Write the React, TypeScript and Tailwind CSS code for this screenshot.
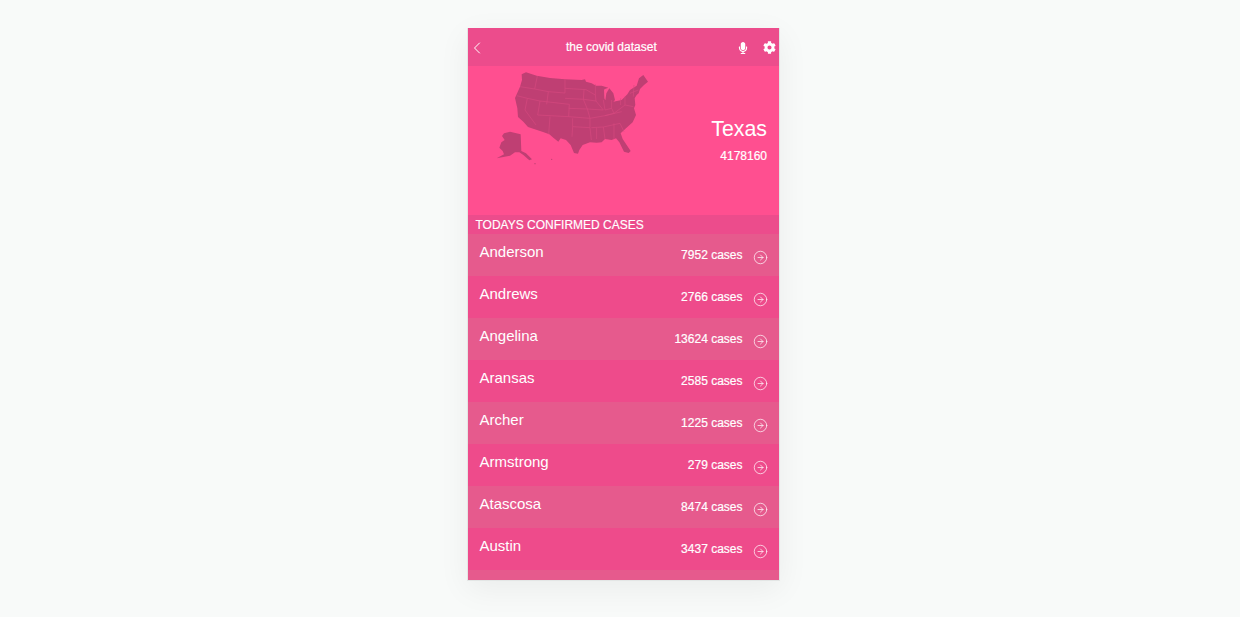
import { ChevronLeft, CircleArrowRight } from "lucide-react";
import { FaCog, FaMicrophone } from "react-icons/fa";

const counties = [
  { name: "Anderson", cases: 7952 },
  { name: "Andrews", cases: 2766 },
  { name: "Angelina", cases: 13624 },
  { name: "Aransas", cases: 2585 },
  { name: "Archer", cases: 1225 },
  { name: "Armstrong", cases: 279 },
  { name: "Atascosa", cases: 8474 },
  { name: "Austin", cases: 3437 },
];

// hand traced, coordinates are 3x screen pixels
function UsMap() {
  return (
    <svg viewBox="0 0 510 300" className="h-[100px] w-[170px] blur-[0.5px]" aria-hidden="true">
      <g fill="#bf3f73">
        <path d="M95 28 108 22 140 32 180 39 225 43 275 45 285 43 288 50 305 55 318 62 335 62 355 68 345 72 342 74 343 100 346 106 349 85 358 70 370 85 375 105 370 110 395 105 412 88 420 75 440 62 447 40 460 30 474 50 462 60 450 72 446 85 440 90 434 100 436 120 432 130 438 150 428 172 408 190 392 205 398 222 422 258 416 264 402 260 388 232 378 220 365 225 345 222 335 232 320 233 300 232 278 240 268 255 264 266 252 264 242 240 228 225 212 220 205 230 190 218 178 208 159 201 114 186 100 170 84 156 82 130 75 99 90 65 96 45Z" />
        <path d="M42 205 60 200 92 208 94 258 108 265 126 283 118 286 100 270 88 262 75 262 60 272 40 276 20 280 42 268 38 258 28 248 34 232 44 225 36 213Z" />
        <circle cx="185" cy="283" r="2" />
        <circle cx="135" cy="296" r="2" />
      </g>
      <g fill="none" stroke="#d6487f" strokeWidth="2">
        <path d="M142 33 134 72 175 80 170 118 M90 65 134 72 M80 92 112 100 105 135 138 180 M112 100 150 108 143 150 M150 108 238 118 M175 80 225 84 225 43 M225 70 288 74 M225 100 282 103 M238 118 236 155 M143 150 236 155 M180 155 176 208 M236 130 292 132 M236 155 300 160 M248 160 248 185 300 188 M248 185 246 215 M282 74 280 103 292 132 300 160 300 188 304 225" />
        <path d="M288 74 316 90 318 108 340 135 M282 103 318 108 M316 58 316 90 M340 105 345 135 365 130 M365 105 365 130 372 145 M292 132 340 135 M300 160 345 152 395 140 M345 152 372 145 405 120 M304 188 340 186 390 175 M340 186 345 222 M372 175 372 222 M390 175 402 200 M320 188 320 222 M405 120 430 125 M405 95 405 120 M432 60 430 95 M392 100 392 120 M420 85 445 75" />
      </g>
    </svg>
  );
}

export default function App() {
  return (
    <div className="min-h-[617px] bg-[#f8faf9] pl-[467px] pt-[28px] font-['Liberation_Sans',Arial,sans-serif] text-white">
      <div className="flex h-[553px] w-[313px] flex-col overflow-hidden border-x border-b border-[#e3e6e5] shadow-[0_8px_30px_rgba(0,0,0,0.06)]">
        <header className="flex h-[38px] shrink-0 items-center bg-[#ec4c8c] pr-[3px]">
          <ChevronLeft size={20} strokeWidth={1.2} className="-ml-px mt-px" />
          <h1 className="ml-[79px] text-[12px] leading-none [-webkit-text-stroke:0.2px_white]">the covid dataset</h1>
          <FaMicrophone size={12} className="ml-auto mt-[1px]" />
          <FaCog size={13} className="ml-[14px] mt-[1px]" />
        </header>

        <section className="flex h-[149px] shrink-0 bg-[#ff4f90] pr-3">
          <div className="ml-[22px] -mt-px">
            <UsMap />
          </div>
          <div className="ml-auto flex flex-col items-end pt-[50px]">
            <h2 className="text-[21.33px] leading-[26px]">Texas</h2>
            <p className="mt-[7px] text-[12px] leading-[14px] [-webkit-text-stroke:0.2px_white]">4178160</p>
          </div>
        </section>

        <h3 className="h-[19px] shrink-0 bg-[#ec4c8c] pl-[7.5px] pt-[3px] text-[12px] leading-[14px] [-webkit-text-stroke:0.15px_white]">TODAYS CONFIRMED CASES</h3>

        <ul className="flex-1 bg-[#e65a8d]">
          {counties.map((county, i) => (
            <li
              key={county.name}
              className={`flex h-[42px] items-start pl-[11.5px] pr-[11px] ${i % 2 === 0 ? "bg-[#e65a8d]" : "bg-[#ee4b8b]"}`}
            >
              <span className="mt-[9px] text-[15px] leading-[17px]">{county.name}</span>
              <span className="ml-auto mt-[14px] text-[12px] leading-[14px] [-webkit-text-stroke:0.2px_white]">{county.cases} cases</span>
              <CircleArrowRight size={15} strokeWidth={1.25} className="ml-[10.5px] mt-4 opacity-90" />
            </li>
          ))}
        </ul>
      </div>
    </div>
  );
}
